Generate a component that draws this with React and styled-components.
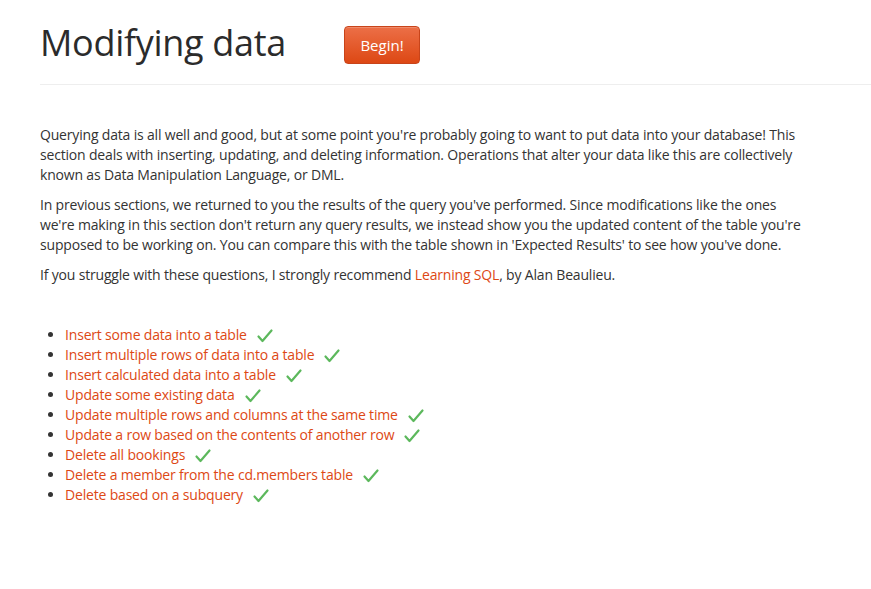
import React from "react";
import styled, { createGlobalStyle } from "styled-components";

const Global = createGlobalStyle`
  html, body { margin: 0; padding: 0; background: #fff; }
  body { font-family: "Open Sans", "Noto Sans", sans-serif; color: #333; }
`;

const Page = styled.div`
  padding: 0 0 0 40px;
  overflow: hidden;
`;

const Header = styled.header`
  display: flex;
  align-items: center;
  gap: 58px;
  padding: 19px 0 17px 0;
  border-bottom: 1px solid #eee;
`;

const Title = styled.h1`
  margin: 0;
  font-size: 36px;
  font-weight: 400;
  color: #2b2b2b;
  line-height: 48px;
  letter-spacing: -0.3px;
`;

const Button = styled.button`
  font-family: inherit;
  font-size: 15px;
  color: #fff;
  width: 76px;
  height: 38px;
  border: 1px solid #c8441a;
  border-radius: 4px;
  background: linear-gradient(#ec6f47, #dd4814);
  box-shadow: inset 0 1px 0 rgba(255,255,255,0.2);
  margin-top: 3px;
`;

const Content = styled.main`
  padding-top: 40px;
  width: 772px;
`;

const Para = styled.p`
  margin: 0 0 10px;
  font-size: 14px;
  line-height: 20px;
  letter-spacing: -0.18px;
`;

const Link = styled.a`
  color: #dd4814;
  text-decoration: none;
`;

const List = styled.ul`
  margin: 40px 0 0;
  padding-left: 25px;
  font-size: 14px;
  line-height: 20px;
  letter-spacing: -0.18px;
`;

const Item = styled.li`
  color: #333;
`;

const Check = styled.svg`
  width: 16px;
  height: 14px;
  margin-left: 10px;
  vertical-align: -3px;
`;

const CheckMark = () => (
  <Check viewBox="0 0 16 14">
    <path d="M1.5 7.5 L5.5 12 L14.5 1.5" fill="none" stroke="#5cb85c" strokeWidth="2.2" strokeLinecap="round" strokeLinejoin="round" />
  </Check>
);

const items = [
  "Insert some data into a table",
  "Insert multiple rows of data into a table",
  "Insert calculated data into a table",
  "Update some existing data",
  "Update multiple rows and columns at the same time",
  "Update a row based on the contents of another row",
  "Delete all bookings",
  "Delete a member from the cd.members table",
  "Delete based on a subquery",
];

export default function App() {
  return (
    <Page>
      <Global />
      <Header>
        <Title>Modifying data</Title>
        <Button>Begin!</Button>
      </Header>
      <Content>
        <Para>
          Querying data is all well and good, but at some point you're probably going to want to put data into your database! This section deals with inserting, updating, and deleting information. Operations that alter your data like this are collectively known as Data Manipulation Language, or DML.
        </Para>
        <Para>
          In previous sections, we returned to you the results of the query you've performed. Since modifications like the ones we're making in this section don't return any query results, we instead show you the updated content of the table you're supposed to be working on. You can compare this with the table shown in 'Expected Results' to see how you've done.
        </Para>
        <Para>
          If you struggle with these questions, I strongly recommend <Link href="#">Learning SQL</Link>, by Alan Beaulieu.
        </Para>
        <List>
          {items.map((t) => (
            <Item key={t}>
              <Link href="#">{t}</Link>
              <CheckMark />
            </Item>
          ))}
        </List>
      </Content>
    </Page>
  );
}
